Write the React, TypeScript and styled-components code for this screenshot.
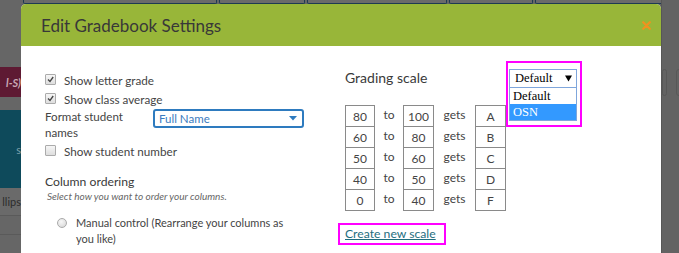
import React from "react";
import styled, { createGlobalStyle } from "styled-components";

const GlobalStyle = createGlobalStyle`
  html, body { margin: 0; padding: 0; background: #666; overflow: hidden; }
  body { font-family: Lato, "Open Sans", sans-serif; }
`;

const Page = styled.div`
  display: flex;
  width: 679px;
  height: 253px;
  overflow: hidden;
  background: #666;
`;

const LeftStrip = styled.div`
  width: 21px;
  flex: none;
  display: flex;
  flex-direction: column;
  overflow: hidden;
`;

const Band = styled.div<{ $h: number; $bg: string; $color?: string; $italic?: boolean; $line?: boolean }>`
  height: ${(p) => p.$h}px;
  flex: none;
  background: ${(p) => p.$bg};
  color: ${(p) => p.$color || "#333"};
  font-size: 11px;
  font-style: ${(p) => (p.$italic ? "italic" : "normal")};
  font-weight: ${(p) => (p.$italic ? 700 : 400)};
  display: flex;
  align-items: center;
  justify-content: flex-end;
  white-space: nowrap;
  overflow: hidden;
  border-bottom: ${(p) => (p.$line ? "1px solid #5a5a5a" : "none")};
`;

const CenterCol = styled.div`
  width: 640px;
  flex: none;
  display: flex;
  flex-direction: column;
`;

const TopTabs = styled.div`
  height: 4px;
  flex: none;
  display: flex;
  gap: 2px;
  padding-left: 2px;
`;

const Tab = styled.div<{ $w: number }>`
  width: ${(p) => p.$w}px;
  flex: none;
  height: 3px;
  background: #6a6a6a;
  border: 1px solid #1e3a52;
  border-top: none;
  border-radius: 0 0 2px 2px;
`;

const Modal = styled.div`
  flex: 1;
  background: #fff;
  border-radius: 5px 5px 0 0;
  overflow: hidden;
  display: flex;
  flex-direction: column;
`;

const Header = styled.div`
  height: 42px;
  flex: none;
  background: #98b639;
  display: flex;
  align-items: center;
  justify-content: space-between;
  padding: 0 10px 0 20px;
`;

const Title = styled.h2`
  margin: 0;
  font-size: 17px;
  font-weight: 400;
  color: #383838;
`;

const CloseBtn = styled.button`
  border: none;
  background: none;
  padding: 0;
  width: 9px;
  height: 9px;
  display: flex;
  cursor: pointer;
`;

const Body = styled.div`
  display: grid;
  grid-template-columns: 260px 1fr;
  column-gap: 40px;
  padding: 15px 0 0 24px;
  font-size: 11px;
  color: #444;
`;

const LeftCol = styled.div`
  padding-top: 9px;
  display: flex;
  flex-direction: column;
`;

const CheckRow = styled.label`
  height: 19px;
  display: flex;
  align-items: center;
  gap: 8px;
  font-size: 11.7px;
  color: #444;
  white-space: nowrap;
`;

const Box = styled.span`
  width: 9px;
  height: 9px;
  flex: none;
  border: 1px solid #ababab;
  border-radius: 1px;
  background: linear-gradient(#f6f6f6, #dedede);
  display: flex;
  align-items: center;
  justify-content: center;
`;

const FormatRow = styled.div`
  display: flex;
  align-items: flex-start;
  padding-top: 1px;
`;

const FormatLabel = styled.div`
  width: 108px;
  flex: none;
  line-height: 16px;
  font-size: 11.6px;
  color: #444;
`;

const NameSelect = styled.div`
  width: 151px;
  height: 19px;
  box-sizing: border-box;
  border: 2px solid #2e7bbf;
  border-radius: 3px;
  display: flex;
  align-items: center;
  justify-content: space-between;
  padding: 0 5px 0 4px;
  color: #3b7cc0;
  font-size: 11.5px;
`;

const SectionTitle = styled.div`
  margin-top: 14px;
  line-height: 16px;
  font-size: 12.2px;
  color: #3a3a3a;
`;

const Hint = styled.div`
  line-height: 12px;
  font-size: 10px;
  font-style: italic;
  color: #666;
  padding-left: 2px;
  white-space: nowrap;
`;

const RadioRow = styled.label`
  margin-top: 13px;
  padding-left: 12px;
  display: flex;
  align-items: flex-start;
  gap: 9px;
  line-height: 16px;
  font-size: 11px;
  color: #444;
  white-space: nowrap;
`;

const Radio = styled.span`
  width: 8px;
  height: 8px;
  flex: none;
  margin-top: 3px;
  border: 1px solid #aaa;
  border-radius: 50%;
  background: radial-gradient(circle at 40% 35%, #f7f7f7, #d4d4d4);
`;

const RightCol = styled.div`
  display: grid;
  grid-template-columns: 161px auto;
  grid-template-rows: 44px auto auto;
  align-items: start;
`;

const ScaleTitle = styled.div`
  grid-row: 1;
  grid-column: 1;
  padding-top: 8px;
  line-height: 18px;
  font-size: 14px;
  color: #3a3a3a;
  white-space: nowrap;
`;

const Annotation = styled.div`
  grid-row: 1 / span 2;
  grid-column: 2;
  width: 76px;
  height: 66px;
  box-sizing: border-box;
  border: 2px solid #ff00ff;
  padding: 6px 3px 0 1px;
  font-family: "Liberation Serif", serif;
  font-size: 12.5px;
  position: relative;
  z-index: 2;
`;

const NativeSelect = styled.div`
  height: 19px;
  box-sizing: border-box;
  border: 1px solid #7fa6dc;
  display: flex;
  align-items: center;
  justify-content: space-between;
  padding: 0 4px 0 5px;
  color: #000;
  background: #fff;
`;

const OptionList = styled.div`
  border: 1px solid #7fa6dc;
  border-top: none;
  background: #fff;
`;

const Option = styled.div<{ $active?: boolean }>`
  height: 16px;
  line-height: 16px;
  padding-left: 3px;
  background: ${(p) => (p.$active ? "#3399ff" : "#fff")};
  color: ${(p) => (p.$active ? "#fff" : "#000")};
`;

const ScaleTable = styled.div`
  grid-row: 2;
  grid-column: 1;
  display: flex;
  flex-direction: column;
`;

const ScaleRow = styled.div<{ $first?: boolean }>`
  display: grid;
  grid-template-columns: 30px 28px 31px 41px 31px;
  height: 22px;
  margin-top: ${(p) => (p.$first ? 0 : -1)}px;
`;

const Cell = styled.div`
  border: 1px solid #8a8a8a;
  display: flex;
  align-items: center;
  justify-content: center;
  font-size: 12px;
  color: #444;
`;

const Word = styled.div`
  display: flex;
  align-items: center;
  justify-content: center;
  font-size: 12px;
  color: #444;
  padding-bottom: 3px;
`;

const LinkBox = styled.div`
  grid-row: 3;
  grid-column: 1;
  justify-self: start;
  margin: 10px 0 0 -7px;
  border: 2px solid #ff00ff;
  padding: 0 8px 0 5px;
  line-height: 18px;
  white-space: nowrap;
`;

const Link = styled.a`
  font-size: 12.2px;
  color: #1f6e80;
  text-decoration: underline;
`;

const RightStrip = styled.div`
  flex: 1;
  background: #636363;
  border-left: 1px solid #575757;
  display: flex;
  gap: 9px;
  padding-top: 69px;
  align-items: flex-start;
`;

const Ghost = styled.div<{ $w: number }>`
  width: ${(p) => p.$w}px;
  height: 25px;
  flex: none;
  border: 1px solid #585858;
  border-radius: 3px;
`;

const Check = () => (
  <svg width="7" height="7" viewBox="0 0 7 7">
    <path d="M1 3.5 L3 5.5 L6.2 1" fill="none" stroke="#444" strokeWidth="1.3" />
  </svg>
);

const rows = [
  ["80", "100", "A"],
  ["60", "80", "B"],
  ["50", "60", "C"],
  ["40", "50", "D"],
  ["0", "40", "F"],
];

export default function App() {
  return (
    <>
      <GlobalStyle />
      <Page>
        <LeftStrip>
          <Band $h={67} $bg="#666" />
          <Band $h={30} $bg="#5e1a33" $color="#c9a9b4" $italic>
            l-S)
          </Band>
          <Band $h={13} $bg="#666" />
          <Band $h={78} $bg="#0e4a5b" $color="#7fa1ab">
            s
          </Band>
          <Band $h={27} $bg="#6a6a6a" $color="#2c2c2c" $line>
            llips
          </Band>
          <Band $h={18} $bg="#666" $line />
          <Band $h={20} $bg="#666" />
        </LeftStrip>
        <CenterCol>
          <TopTabs>
            <Tab $w={192} />
            <Tab $w={84} />
            <Tab $w={138} />
            <Tab $w={82} />
            <Tab $w={130} />
          </TopTabs>
          <Modal>
            <Header>
              <Title>Edit Gradebook Settings</Title>
              <CloseBtn aria-label="Close">
                <svg width="9" height="9" viewBox="0 0 9 9">
                  <path d="M1.2 1.2 L7.8 7.8 M7.8 1.2 L1.2 7.8" stroke="#f0921e" strokeWidth="2.2" strokeLinecap="round" />
                </svg>
              </CloseBtn>
            </Header>
            <Body>
              <LeftCol>
                <CheckRow>
                  <Box>
                    <Check />
                  </Box>
                  Show letter grade
                </CheckRow>
                <CheckRow>
                  <Box>
                    <Check />
                  </Box>
                  Show class average
                </CheckRow>
                <FormatRow>
                  <FormatLabel>
                    Format student
                    <br />
                    names
                  </FormatLabel>
                  <NameSelect>
                    Full Name
                    <svg width="8" height="5" viewBox="0 0 8 5">
                      <path d="M0 0 H8 L4 4.5 Z" fill="#2e7bbf" />
                    </svg>
                  </NameSelect>
                </FormatRow>
                <CheckRow>
                  <Box />
                  Show student number
                </CheckRow>
                <SectionTitle>Column ordering</SectionTitle>
                <Hint>Select how you want to order your columns.</Hint>
                <RadioRow>
                  <Radio />
                  <span>
                    Manual control (Rearrange your columns as
                    <br />
                    you like)
                  </span>
                </RadioRow>
              </LeftCol>
              <RightCol>
                <ScaleTitle>Grading scale</ScaleTitle>
                <Annotation>
                  <NativeSelect>
                    Default
                    <svg width="7" height="7" viewBox="0 0 7 7">
                      <path d="M0 0.5 H7 L3.5 6.5 Z" fill="#000" />
                    </svg>
                  </NativeSelect>
                  <OptionList>
                    <Option>Default</Option>
                    <Option $active>OSN</Option>
                  </OptionList>
                </Annotation>
                <ScaleTable>
                  {rows.map(([from, to, g], i) => (
                    <ScaleRow key={g} $first={i === 0}>
                      <Cell>{from}</Cell>
                      <Word>to</Word>
                      <Cell>{to}</Cell>
                      <Word>gets</Word>
                      <Cell>{g}</Cell>
                    </ScaleRow>
                  ))}
                </ScaleTable>
                <LinkBox>
                  <Link href="#">Create new scale</Link>
                </LinkBox>
              </RightCol>
            </Body>
          </Modal>
        </CenterCol>
        <RightStrip>
          <Ghost $w={3} />
          <Ghost $w={10} />
        </RightStrip>
      </Page>
    </>
  );
}
